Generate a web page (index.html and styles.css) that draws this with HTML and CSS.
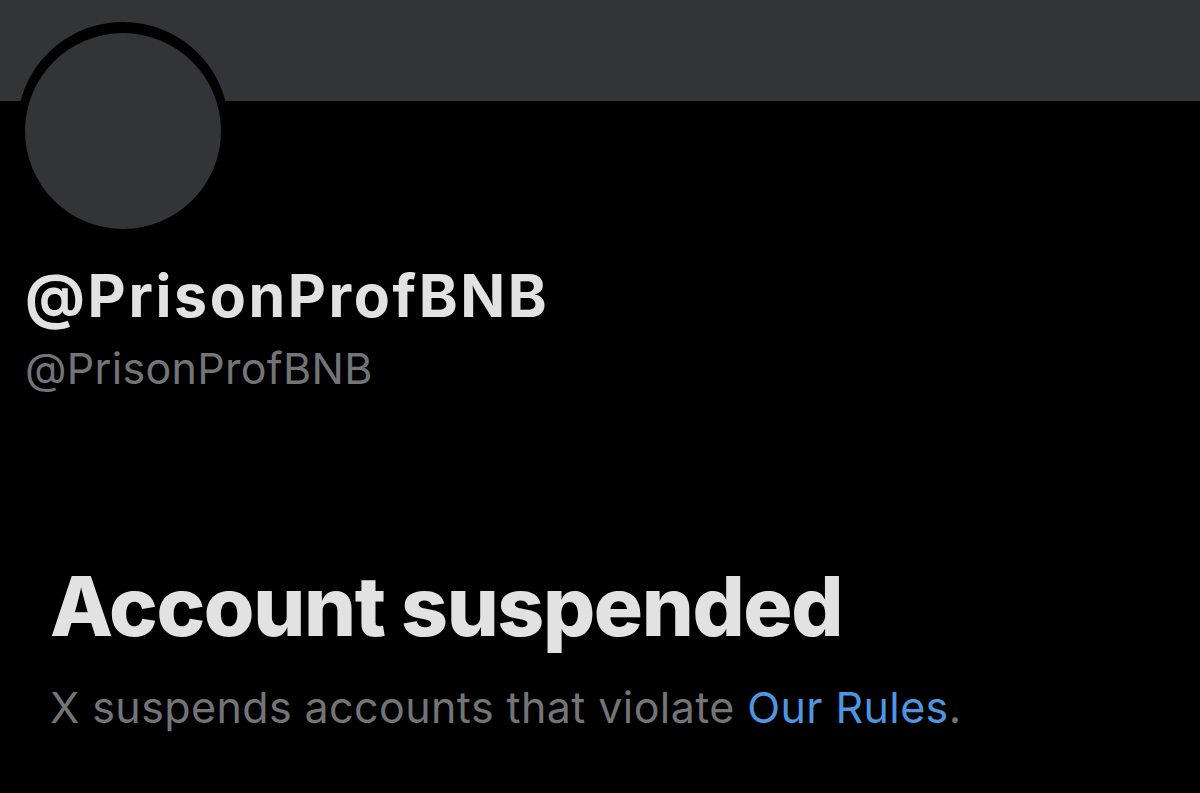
FILE: index.html
```html
<!DOCTYPE html>
<html lang="en">
<head>
<meta charset="utf-8">
<title>@PrisonProfBNB</title>
<link rel="stylesheet" href="styles.css">
</head>
<body>
<div class="page">
  <div class="banner"></div>
  <div class="avatar-ring"><div class="avatar"></div></div>
  <div class="names">
    <div class="display-name">@PrisonProfBNB</div>
    <div class="handle">@PrisonProfBNB</div>
  </div>
  <div class="notice">
    <h1 class="notice-title">Account suspended</h1>
    <p class="notice-text">X suspends accounts that violate <a class="rules" href="#">Our Rules</a>.</p>
  </div>
</div>
</body>
</html>
```
FILE: styles.css
```css
html, body {
  margin: 0;
  padding: 0;
  background: #000;
}
.page {
  position: relative;
  width: 1200px;
  height: 793px;
  overflow: hidden;
  background: #000;
  font-family: Inter, "Liberation Sans", sans-serif;
}
.banner {
  height: 101px;
  background: #333438;
}
.avatar-ring {
  position: absolute;
  left: 17px;
  top: 22px;
  width: 212px;
  height: 212px;
  border-radius: 50%;
  background: #000;
}
.avatar {
  margin: 11px 0 0 8px;
  width: 196px;
  height: 196px;
  border-radius: 50%;
  background: #333438;
}
.names {
  padding: 160px 0 0 25px;
}
.display-name {
  font-size: 59px;
  font-weight: 700;
  color: #e2e2e2;
  line-height: 70px;
  letter-spacing: 2.6px;
}
.handle {
  font-size: 43px;
  font-weight: 400;
  color: #737477;
  line-height: 52px;
  margin-top: 11px;
  letter-spacing: 0.3px;
}
.notice {
  padding: 165px 0 0 50px;
}
.notice-title {
  margin: 0;
  font-size: 82px;
  font-weight: 800;
  color: #e2e2e2;
  line-height: 96px;
  letter-spacing: -1.4px;
}
.notice-text {
  margin: 26px 0 0;
  font-size: 43px;
  font-weight: 400;
  color: #737477;
  line-height: 52px;
  letter-spacing: 0.4px;
}
.rules {
  color: #4d96e2;
  text-decoration: none;
}
```
